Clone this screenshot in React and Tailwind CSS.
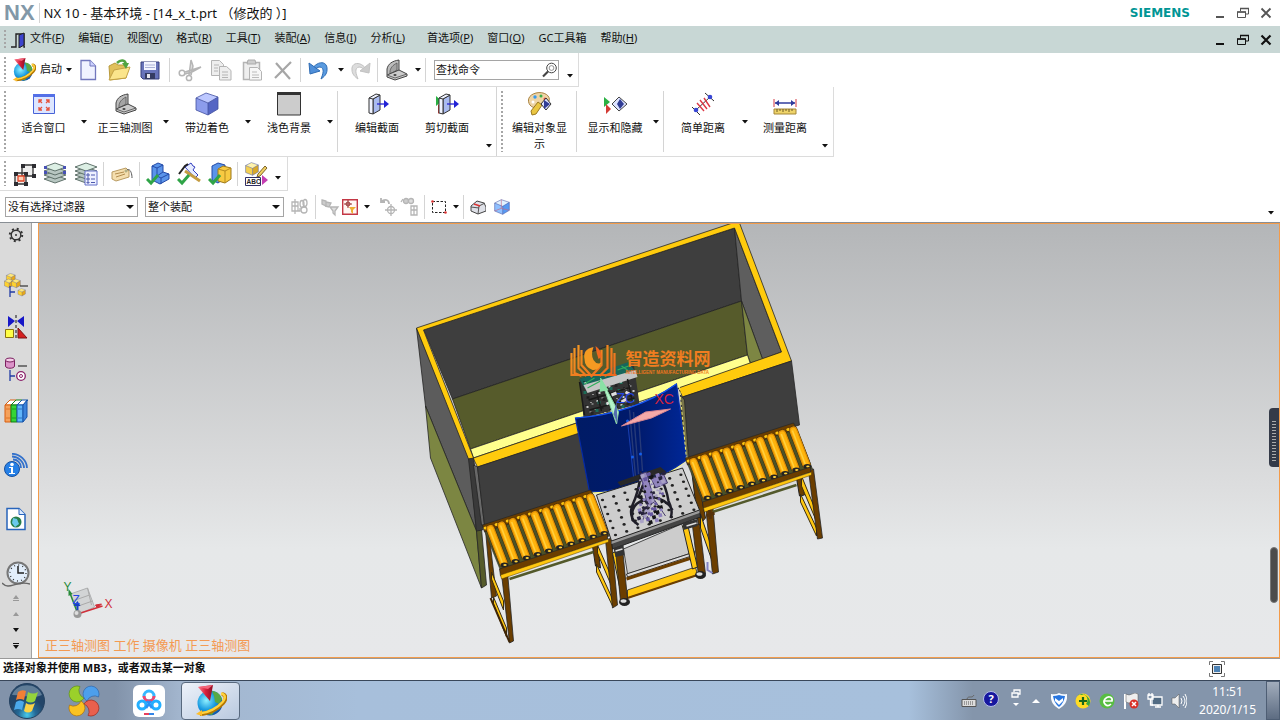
import React from 'react';

const Svg = ({ children, className = 'size-6', box = '0 0 24 24' }) => (
  <svg viewBox={box} className={'shrink-0 ' + className} fill="none" aria-hidden="true">{children}</svg>
);

const Caret = ({ className = '' }) => (
  <svg viewBox="0 0 6 4" className={'h-1 w-1.5 shrink-0 ' + className} aria-hidden="true"><path d="M0 0h6L3 3.6z" fill="#111" /></svg>
);

const Drop = ({ label, className = '' }) => (
  <button aria-label={label} className={'flex w-1.5 shrink-0 items-center ' + className}><Caret /></button>
);

const Sep = ({ className = 'h-6' }) => <div className={'w-px shrink-0 bg-[#d4d4d4] ' + className} />;

const Grip = () => <div className="my-1 ml-1 w-0.5 shrink-0 self-stretch bg-[repeating-linear-gradient(to_bottom,#a6a6a6_0_2px,transparent_2px_4px)]" />;

const Tool = ({ label, children, className = 'w-[31px]' }) => (
  <button aria-label={label} className={'flex h-7 shrink-0 items-center justify-center ' + className}>{children}</button>
);

const NxGlobe = ({ className = 'size-6' }) => (
  <Svg className={className} box="0 0 32 32">
    <defs>
      <radialGradient id="globe" cx=".35" cy=".4" r=".75"><stop stopColor="#8ff0ff" /><stop offset=".5" stopColor="#199be0" /><stop offset="1" stopColor="#0b3c99" /></radialGradient>
      <linearGradient id="cone" x1="0" x2="1"><stop stopColor="#ff8290" /><stop offset=".5" stopColor="#d8203c" /><stop offset="1" stopColor="#8c0d22" /></linearGradient>
    </defs>
    <circle cx="15" cy="18" r="12.5" fill="url(#globe)" />
    <path d="M17 6c5 0 9 4 10 8l-3 5-4-2-1-6zM14 24l6 1-3 5-4-1z" fill="#57a845" />
    <path d="M27 9c4 1 5 4 1 9-5 6-15 11-23 11" stroke="#b67700" strokeWidth="4" />
    <path d="M26 8.500c4.500 1 5 4 1.500 8.500-5 6-14 10.500-22 11.300" stroke="#ffd23e" strokeWidth="2.400" />
    <path d="m1 29 6-4v6z" fill="#ffbd27" />
    <path d="M3 2 18 0l-3 16z" fill="url(#cone)" />
    <path d="m3 2 15-2-5 4z" fill="#f2657a" />
  </Svg>
);

const NewDoc = () => <Svg><path d="M5 2.500h9l5.500 5.500v13.500H5z" fill="#f0f2ff" stroke="#7277bd" strokeWidth="1.300" /><path d="M14 2.500V8h5.500" fill="#cdd2ff" stroke="#7277bd" /></Svg>;
const OpenFolder = () => <Svg><path d="M2 8 8 5l3 2h8v13L3 22z" fill="#e0c05b" stroke="#b99a3c" /><path d="m2 22 5-10 16-3-4 11z" fill="#fbe58c" stroke="#c4a245" /><path d="M10 5c4-4 8-3 9 1" stroke="#50a442" strokeWidth="2.500" /><path d="m15 5 7 0-3 6z" fill="#50a442" /></Svg>;
const Save = () => <Svg><path d="M3 4h18v17H5l-2-2z" fill="#6773ba" stroke="#363f7c" /><path d="M6 4h12v8H6z" fill="#f2f4ff" /><path d="M7 15h10v6H7z" fill="#343b62" /><path d="M9 16h3v4H9z" fill="#e5e5ee" /><path d="M7 7h10M7 9.500h10" stroke="#aab1d6" /></Svg>;
const Cut = () => <Svg><g stroke="#b5b5b5" strokeWidth="1.500"><circle cx="4" cy="15" r="2.800" /><circle cx="11" cy="20" r="2.600" /><path d="m7 14 16-5-9 5-7 2M11 17l2-15 2 6-2 9" fill="#ddd" /></g></Svg>;
const Copy = () => <Svg><g fill="#eee" stroke="#b4b4b4"><path d="M2.500 2.500h8l4 4v11h-12z" /><path d="M10.500 8.500h7l4.500 4v9.500H10.500z" /><path d="M5 7h5M5 10h4M5 13h4M13 14h6M13 17h6M13 19.500h6" /></g></Svg>;
const Paste = () => <Svg><path d="M3.500 4.500h16v17h-16z" fill="#eee" stroke="#b4b4b4" strokeWidth="1.500" /><path d="M8 2h7l1 4H7z" fill="#ccc" stroke="#aaa" /><path d="M9.500 9.500h8l4 4v8.500h-12z" fill="#f7f7f7" stroke="#b4b4b4" /><path d="M12 14h5M12 17h7M12 19.500h7" stroke="#bbb" /></Svg>;
const Delete = () => <Svg><path d="m5 5 14 16M20 4 4 20" stroke="#a6a6a6" strokeWidth="2.200" /></Svg>;
const Undo = () => <Svg><path d="M5 11C11 2 21 3 20 12c0 4-3 7-6 9 2-5 4-11-1-12-3 0-5 2-5 4z" fill="#5a9be0" stroke="#2f6cb4" /><path d="m2 5 1 11 10-3z" fill="#4f8fd9" stroke="#2f6cb4" /></Svg>;
const Redo = () => <Svg><path d="M18 11C13 3 3 4 4 12c0 4 3 7 6 9-2-5-4-11 1-12 3 0 5 2 5 4z" fill="#ddd" stroke="#c2c2c2" /><path d="m22 5-1 10-9-2z" fill="#ccc" stroke="#c2c2c2" /></Svg>;
const Trimetric = () => <Svg><path d="M3 17V11c1-5 5-8 12-9v11L4 18z" fill="#bcbcbc" stroke="#444" /><path d="M6 14c0-4 3-7 7-9v7l-7 4z" fill="#a4a4a4" stroke="#555" strokeWidth=".8" /><path d="m3 17 12-5 8 4v2l-12 4-8-3z" fill="#cacaca" stroke="#444" /><path d="m3 17 8 3 12-4" stroke="#666" /><ellipse cx="11" cy="17" rx="1.600" ry="1" fill="#444" /></Svg>;
const Fit = () => <Svg><path d="M1.500 2.500h21v19h-21z" fill="#dde6ff" stroke="#4863d8" /><path d="M1 2h22v3H1z" fill="#5470e7" /><g stroke="#e6523c" strokeWidth="1.300"><path d="m10 11-3-3m0 3V8h3M14 11l3-3m0 3V8h-3M10 15l-3 3m0-3v3h3M14 15l3 3m0-3v3h-3" /></g></Svg>;
const Cube = ({ a = '#bdc8ff', b = '#8c9cec', c = '#5566c4' }) => <><path d="m1 6 10-5 12 4-10 6z" fill={a} /><path d="m1 6 12 5v12L1 18z" fill={b} /><path d="m13 11 10-6v12l-10 6z" fill={c} /><path d="m1 6 10-5 12 4v12l-10 6-12-5zM1 6l12 5 10-6M13 11v12" stroke="#4251a0" strokeWidth=".8" /></>;
const Shaded = () => <Svg><Cube /></Svg>;
const Light = () => <Svg><path d="M.500 1h23v22H.500z" fill="#ccc" stroke="#333" /><path d="M0 0h24v3H0z" fill="#333" /></Svg>;
const Section = ({ clip }) => <Svg>{clip && <><path d="m1 4 6 5-6 5z" fill="#2ab043" /><path d="m3 12 5 5-5 5z" fill="#d33b35" /></>}<path d="m8 7 7-4v15l-7 4z" fill="#a9bbef" stroke="#333" /><path d="m4 6 4 1v15l-4-1zM4 6l7-4 4 1-7 4" fill="#eef2ff" stroke="#333" /><path d="M12 12h8" stroke="#2323d5" strokeWidth="1.300" /><path d="m19 8 5 4-5 4z" fill="#2323d5" /></Svg>;
const Eye = () => <><path d="m13 12 5-6 5 6-5 6z" fill="#dde3ff" stroke="#333" /><path d="m16 8 6 4-6 5z" fill="#313d96" /></>;
const PaletteIcon = () => <Svg><path d="M8 1c8-2 15 3 13 8s-6 1-8 4-8 4-11 0S0 3 8 1z" fill="#eed4a6" stroke="#a98341" /><circle cx="7" cy="5" r="1.700" fill="#359bf0" /><circle cx="13" cy="4" r="1.500" fill="#3ab04a" /><circle cx="17" cy="7" r="1.500" fill="#e84a38" /><circle cx="5" cy="10" r="1.500" fill="#fff" /><path d="m3 19 7-9 4 3-6 9-4 1z" fill="#eac642" stroke="#9a7921" /><Eye /></Svg>;
const ShowHide = () => <Svg><path d="m1 5 6 5-6 5z" fill="#2ab043" /><path d="m3 12 5 5-5 5z" fill="#d33b35" /><path d="m9 12 7-7 8 7-8 7z" fill="#dce2ff" stroke="#444" /><path d="m14 12 3-5 4 5-4 5z" fill="#303c94" /></Svg>;
const Distance = () => <Svg><path d="m5 18 14-13M1 15l8 8M14 1l9 8" stroke="#333" /><path d="m6 11 7 8M9 8l7 9M13 6l6 9" stroke="#dc3845" strokeWidth="1.400" /><circle cx="5" cy="18" r="2.300" fill="#3846d4" /><circle cx="19" cy="5" r="2.300" fill="#3846d4" /></Svg>;
const Ruler = () => <Svg><path d="M1 7v8M23 7v8" stroke="#d43b44" /><path d="M2 11h20" stroke="#303c9c" strokeWidth="1.500" /><path d="m2 11 4-3v6zM22 11l-4-3v6z" fill="#303c9c" /><path d="M1 17h22v5H1z" fill="#eed369" stroke="#a58738" /><path d="M4 17v3m3-3v2m3-2v3m3-3v2m3-2v3m3-3v2" stroke="#6e5b25" /></Svg>;
const GroupIcon = () => <Svg><path d="M10 3h11v11H10zM3 11h11v11H3z" stroke="#333" strokeWidth="1.300" fill="#eee" />{[[9, 2], [20, 2], [20, 12], [2, 10], [12, 10], [2, 20], [12, 20]].map(([x, y]) => <path key={x + '-' + y} d={`M${x} ${y}h4v4h-4z`} fill="#2d2d32" />)}<path d="M6 14h6v5H6z" fill="#ffd0b4" stroke="#e24628" strokeWidth="1.300" /></Svg>;
const Layers = ({ list }) => <Svg>{[17, 13, 9, 5].map((y, i) => <path key={y} d={`m1 ${y} 11-4 11 4-11 4z`} fill={i === 3 ? '#dcefe4' : '#b7c6c1'} stroke="#52655f" strokeWidth=".9" />)}{list ? <><path d="M11 9h12v14H11z" fill="#eef1ff" stroke="#6571c9" /><path d="M13 12h2v2h-2zM13 16h2v2h-2zM13 20h2v1h-2zM17 13h4M17 17h4M17 20.500h4" stroke="#4c58ae" /></> : [[1, 4], [20, 4], [1, 9], [20, 9]].map(([x, y]) => <path key={x + '-' + y} d={`M${x} ${y}h3v3h-3z`} fill="#4851b5" />)}</Svg>;
const Tag = () => <Svg><path d="m2 10 14-4 3 3v6L6 19l-4-2z" fill="#f4deae" stroke="#b99b62" /><path d="m5 12 9-2M6 15l9-3" stroke="#b28b4d" /><circle cx="16" cy="9" r="1" fill="#fff" stroke="#996" /><path d="M17 8c3-2 5 3 5 8" stroke="#555" /></Svg>;
const Check = () => <path d="m1 17 4 4 7-8" stroke="#2fa447" strokeWidth="3" />;
const BlockCheck = ({ kind }) => (
  <Svg>
    {kind === 'ruler' && <><path d="m8 5 6-4 2 3 2 1-2 3 5 5-3 3z" fill="#e6ecff" stroke="#343fc0" /><path d="m8 9 15 10" stroke="#c49c42" strokeWidth="3" /><path d="m2 12 6-8 3-2" stroke="#222" strokeWidth="2" /></>}
    {!kind && <><path d="m6 4 6-3 5 2v7l6 2v5l-9 5-8-4z" fill="#5a94e9" stroke="#234aa8" /><path d="m6 4 5 2 6-3M11 6v8l6-4M11 14l4 2 8-4M15 16v6" stroke="#234aa8" /></>}
    {kind === 'gold' && <><path d="m4 4 6-3 7 2v13l-7 5-6-3z" fill="#5a94e9" stroke="#234aa8" /><path d="m10 7 5-3 8 2v11l-6 4-7-2z" fill="#f7ca42" stroke="#9c781b" /><path d="m10 7 7 2 6-3M17 9v12" stroke="#b58b20" /></>}
    <Check />
  </Svg>
);
const Abc = () => <Svg><g transform="translate(1 0) scale(.58)"><Cube a="#fff3ac" b="#f4d052" c="#d9a929" /></g><path d="m14 12 7-8 2 2-7 8-3 1z" fill="#f1cf63" stroke="#7b642a" /><path d="M1.500 15.500h15v8h-15z" fill="#fff" stroke="#302f65" /><path d="m18 13 6 5-6 5z" fill="#c43db2" /><text x="2.500" y="22" fontSize="6.500" fontWeight="700" fontFamily="Liberation Sans" fill="#222">ABC</text></Svg>;

const Search = () => <Svg className="size-4" box="0 0 16 16"><circle cx="9.500" cy="6" r="4.800" stroke="#444" /><circle cx="9.500" cy="6" r="2.400" stroke="#777" strokeWidth=".8" /><path d="m6 9.500-5 5" stroke="#444" strokeWidth="2.200" /></Svg>;

const menu = [['文件', 'F'], ['编辑', 'E'], ['视图', 'V'], ['格式', 'R'], ['工具', 'T'], ['装配', 'A'], ['信息', 'I'], ['分析', 'L'], ['首选项', 'P'], ['窗口', 'O'], ['GC工具箱', ''], ['帮助', 'H']];

function WindowButtons({ className, dark }) {
  const c = dark ? '#111' : '#555';
  return (
    <div className={'flex items-center gap-2.5 ' + className}>
      <button aria-label="最小化"><Svg className="size-3" box="0 0 12 12"><path d="M2 10h8" stroke={c} strokeWidth="2" /></Svg></button>
      <button aria-label="还原"><Svg className="h-3 w-3.5" box="0 0 14 12"><path d="M4.500 4V1.500h8V7H9M1.500 5h8v5.500h-8z" stroke={c} /><path d="M4 1.500h9M1 5h9" stroke={c} strokeWidth="1.600" /></Svg></button>
      <button aria-label="关闭"><Svg className="size-3" box="0 0 12 12"><path d="m1.500 1.500 9 9m0-9-9 9" stroke={c} strokeWidth={dark ? 2.2 : 1.8} /></Svg></button>
    </div>
  );
}

const Big = ({ label, children, className = 'w-[76px]' }) => (
  <button className={'flex shrink-0 flex-col items-center gap-1 pt-[5px] text-center text-[11px] leading-4 ' + className}>{children}<span>{label}</span></button>
);

function Select({ label, className }) {
  return (
    <label className={'relative flex shrink-0 items-center ' + className}>
      <select aria-label={label} className="h-5 w-full appearance-none border border-[#a5a5a5] bg-white pl-0.5 text-[11px] leading-4"><option>{label}</option></select>
      <svg viewBox="0 0 8 4" className="pointer-events-none absolute right-1 h-1 w-2" aria-hidden="true"><path d="M0 0h8L4 4z" fill="#111" /></svg>
    </label>
  );
}

const Faded = ({ kind }) => (
  <Svg className="size-5" box="0 0 20 20"><g stroke="#b5b5b5" strokeWidth="1.300">
    {kind === 'asm' && <><path d="M2 5h6v9H2zM5 2v15M2 9h6M5 14h5v-3" /><ellipse cx="12" cy="7" rx="2" ry="3.500" /><ellipse cx="15" cy="6" rx="2" ry="3.500" /><ellipse cx="14" cy="13" rx="3" ry="3" /></>}
    {kind === 'filter' && <><path d="m2 3 4 1v5l-4-2zM6 5l5 1-2 4-4-1" fill="#ccc" /><path d="M10 10h8l-3 4v4l-2-2v-2z" fill="#ddd" /></>}
    {kind === 'target' && <><path d="M3 5c4-4 8-2 8 2M3 1v4h4" strokeWidth="1.800" /><circle cx="13" cy="13" r="3.500" /><path d="M13 7v12M7 13h12" /></>}
    {kind === 'tree' && <><circle cx="6" cy="4" r="2.500" fill="#ccc" /><circle cx="11" cy="4" r="2.500" fill="#ddd" /><path d="M11 9h6v9h-6zM11 13h6M14 9v9M3 2l-2 3" /></>}
  </g></Svg>
);

function Toolbars() {
  return (
    <div className="shrink-0 bg-white">
      <div className="flex h-[34px] w-[579px] items-center border-r border-b border-[#dcdcdc]">
        <Grip />
        <button className="ml-1.5 flex w-[60px] shrink-0 items-center text-[11px] whitespace-nowrap"><NxGlobe /><span className="ml-1 pb-px">启动</span><Caret className="ml-1" /></button>
        <Tool label="新建"><NewDoc /></Tool><Tool label="打开"><OpenFolder /></Tool><Tool label="保存"><Save /></Tool>
        <Sep className="mx-1 h-6" />
        <Tool label="剪切"><Cut /></Tool><Tool label="复制"><Copy /></Tool><Tool label="粘贴"><Paste /></Tool><Tool label="删除"><Delete /></Tool>
        <Sep className="mx-0.5 h-6" />
        <Tool label="撤销"><Undo /></Tool><Drop label="撤销列表" className="ml-1" /><Tool label="重做"><Redo /></Tool>
        <Sep className="mx-0.5 h-6" />
        <Tool label="视图方向"><Trimetric /></Tool><Drop label="视图方向列表" className="mx-1" />
        <Sep className="mr-2 h-6" />
        <label className="flex h-5 w-[125px] items-center border border-[#a5a5a5]">
          <input aria-label="查找命令" defaultValue="查找命令" className="w-0 min-w-0 flex-1 pl-px text-[11px] leading-4 outline-none" /><Search />
        </label>
        <Drop label="工具栏选项" className="mt-3 ml-2" />
      </div>
      <div className="flex h-[70px] w-[834px] border-r border-b border-[#dcdcdc]">
        <Grip />
        <Big label="适合窗口" className="w-[75px]"><Fit /></Big><Drop label="适合窗口列表" />
        <Big label="正三轴测图"><Trimetric /></Big><Drop label="正三轴测图列表" />
        <Big label="带边着色"><Shaded /></Big><Drop label="带边着色列表" />
        <Big label="浅色背景"><Light /></Big><Drop label="浅色背景列表" />
        <Sep className="mr-1 ml-1 my-1" />
        <Big label="编辑截面" className="w-[70px]"><Section /></Big>
        <Big label="剪切截面" className="w-[70px]"><Section clip /></Big>
        <Drop label="视图工具栏选项" className="mt-12 mr-1 ml-1" />
        <Sep className="" />
        <Grip />
        <Big label="编辑对象显示" className="w-[73px] px-1.5"><PaletteIcon /></Big>
        <Sep className="my-1" />
        <Big label="显示和隐藏"><ShowHide /></Big><Drop label="显示和隐藏列表" className="mr-1" />
        <Sep className="my-1" />
        <Big label="简单距离" className="w-[78px]"><Distance /></Big><Drop label="简单距离列表" />
        <Big label="测量距离" className="w-[74px]"><Ruler /></Big><Drop label="测量工具栏选项" className="mt-12" />
      </div>
      <div className="flex h-[34px] w-[288px] items-center border-r border-b border-[#dcdcdc]">
        <Grip />
        <div className="ml-0.5 flex"><Tool label="组"><GroupIcon /></Tool><Tool label="图层设置"><Layers /></Tool><Tool label="移动至图层"><Layers list /></Tool></div>
        <Sep className="mx-0.5 h-6" /><Tool label="属性"><Tag /></Tool><Sep className="mx-0.5 h-6" />
        <Tool label="检查部件"><BlockCheck /></Tool><Tool label="检查尺寸"><BlockCheck kind="ruler" /></Tool><Tool label="检查装配"><BlockCheck kind="gold" /></Tool>
        <Sep className="mx-0.5 h-6" /><Tool label="标注"><Abc /></Tool><Drop label="更多" className="mt-2 ml-1" />
      </div>
      <div className="flex h-8 items-center border-b border-[#888e94] bg-white pr-1.5">
        <Select label="没有选择过滤器" className="ml-[5px] w-[133px]" />
        <Select label="整个装配" className="ml-[7px] w-[139px]" />
        <Tool label="组件约束"><Faded kind="asm" /></Tool>
        <Sep />
        <div className="ml-0.5 flex items-center">
          <Tool label="重置过滤器" className="w-6"><Faded kind="filter" /></Tool>
          <Tool label="常规选择" className="w-4"><Svg className="size-4" box="0 0 16 16"><path d="M.700.700h14.600v14.600H.700z" fill="#fff6f3" stroke="#c33745" strokeWidth="1.400" /><circle cx="6" cy="5" r="2" stroke="#933" /><path d="M6 1v8M2 5h8" stroke="#933" /><path d="M7 8h7l-3 3v4l-2-2v-2z" fill="#edae32" /></Svg></Tool>
        </div>
        <Drop label="常规选择列表" className="mx-1.5" />
        <Tool label="恢复选择" className="w-6"><Faded kind="target" /></Tool>
        <Tool label="选择树" className="w-5"><Faded kind="tree" /></Tool>
        <Sep className="mx-1 h-6" />
        <Tool label="矩形选择" className="w-5"><Svg className="size-4" box="0 0 16 16"><path d="M1.500 2.500h13v11h-13z" stroke="#222" strokeDasharray="2.500 1.500" /><circle cx="1.500" cy="2.500" r="1.300" fill="#d33" /><circle cx="14.500" cy="13.500" r="1.300" fill="#d33" /></Svg></Tool>
        <Drop label="矩形选择列表" className="mx-1" /><Sep className="mr-1 h-6" />
        <Tool label="实体" className="w-5"><Svg className="size-4" box="0 0 16 16"><path d="m1 7 6-5 7 2 2 4v4l-8 3-7-3z" fill="#dfe1e8" stroke="#444" /><path d="m8 15 1-8 6-3M1 8l8 1" stroke="#555" /><path d="m4 5 6 2" stroke="#d33" strokeWidth="1.500" /></Svg></Tool>
        <Tool label="面" className="ml-1 w-5"><Svg className="size-4"><Cube a="#e2f2ff" b="#8fc0ff" c="#589af2" /><path d="M11 1v13M1 18l10-4 12 3" stroke="#c36a86" /></Svg></Tool>
        <Drop label="选择条选项" className="mt-3 ml-auto" />
      </div>
    </div>
  );
}

const navIcons = {
  settings: <Svg className="size-4" box="0 0 16 16"><circle cx="8" cy="8" r="4.800" stroke="#333" strokeWidth="1.400" /><circle cx="8" cy="8" r="1" fill="#333" /><circle cx="8" cy="8" r="6.200" stroke="#333" strokeWidth="2" strokeDasharray="2 2.870" /></Svg>,
  assembly: <Svg><g transform="scale(.4)"><g transform="translate(5)"><Cube a="#ffe97a" b="#ffd22e" c="#e6a719" /></g><g transform="translate(0 14)"><Cube a="#ffe97a" b="#ffd22e" c="#e6a719" /></g><g transform="translate(18 14)"><Cube a="#ffe97a" b="#ffd22e" c="#e6a719" /></g><g transform="translate(34 38) scale(.85)"><Cube a="#ffe97a" b="#ffd22e" c="#e6a719" /></g></g><path d="M16 13h8" stroke="#111" /><path d="M6 13v11M6 19h5" stroke="#233ca5" strokeWidth="1.300" /></Svg>,
  constraint: <Svg><path d="m4 1 7 5-7 6zM20 1l-7 5 7 6z" fill="#1717c7" /><path d="M12 0v24" stroke="#111" strokeDasharray="3 2" /><path d="M1.500 14.500h8v8h-8z" fill="#ffff46" stroke="#8a7111" /><path d="m14 13 9 10h-9z" fill="#d52020" stroke="#7b1515" /></Svg>,
  part: <Svg><path d="M1.500 3v6c0 3 9 3 9 0V3" fill="#dc94c9" stroke="#7b215f" /><ellipse cx="6" cy="3" rx="4.500" ry="2" fill="#f5cfe9" stroke="#7b215f" /><path d="M14 9h9" stroke="#111" /><path d="M6 13v11M6 19h5" stroke="#233ca5" strokeWidth="1.300" /><circle cx="17" cy="19" r="4.300" fill="#fff" stroke="#8b226b" strokeWidth="1.300" /><circle cx="17" cy="19" r="1.500" stroke="#8b226b" /></Svg>,
  reuse: <Svg>{[[0, '#f5a15c', '#d85f10'], [6, '#35d435', '#137d13'], [12, '#5fb5fa', '#1754aa']].map(([x, a, b]) => <g key={x}><path d={`M${x + 1} 6l5-5h6l-5 5z`} fill="#fff" stroke={b} /><path d={`M${x + 1} 6h6v17H${x + 1}z`} fill={a} stroke={b} /><path d={`M${x + 2} 10h4M${x + 2} 19h4`} stroke={b} opacity=".7" /></g>)}<path d="m19 6 4-5v17l-4 5z" fill="#3b82da" stroke="#1754aa" /></Svg>,
  hd3d: <Svg><circle cx="8" cy="16" r="7.500" fill="#2680e6" stroke="#164f9f" /><circle cx="8" cy="11.500" r="1.800" fill="#fff" /><path d="M5 14h4v6h2v1H5v-1h2v-5H5z" fill="#fff" /><path d="M9 6.500c4 0 8 3 8 8.500M8 3.500c6 0 12 5 12 11.500M8 .800c8 0 15 7 15 14.200" stroke="#3371cb" strokeWidth="1.800" /></Svg>,
  browser: <Svg><path d="M3 1.500h12l6 6v15H3z" fill="#fff" stroke="#2864bb" strokeWidth="1.500" /><path d="M15 1.500v6h6" fill="#dceaff" stroke="#2864bb" /><circle cx="12" cy="15" r="5.500" fill="#287e4a" /><path d="m9 11 4 1 2 5-4 3-3-4z" fill="#6ac9ed" /></Svg>,
  history: <Svg className="size-7" box="0 0 28 28"><circle cx="16" cy="12" r="10.500" fill="#e2eefb" stroke="#777" strokeWidth="2" /><circle cx="16" cy="12" r="8" stroke="#333" strokeWidth="1.300" strokeDasharray="1 3.190" /><path d="M16 5v7h6" stroke="#222" strokeWidth="1.500" /><path d="M0 22c8 8 13-3 28 1" stroke="#666" strokeWidth="1.300" /></Svg>,
};
const nav = [
  ['设置', 'mb-[30px]', 'settings'],
  ['装配导航器', 'mb-[18px]', 'assembly'],
  ['约束导航器', 'mb-[18px]', 'constraint'],
  ['部件导航器', 'mb-[18px]', 'part'],
  ['重用库', 'mb-[30px]', 'reuse'],
  ['HD3D 工具', 'mb-[30px]', 'hd3d'],
  ['浏览器', 'mb-[30px]', 'browser'],
  ['历史记录', '', 'history'],
];

const line = (a, b, stroke, w) => <path d={`M${a}L${b}`} stroke={stroke} strokeWidth={w} />;

function Rollers({ x, y }) {
  const at = (dx, dy) => `${x + dx} ${y + dy}`;
  return (
    <g>
      <path d={`M${at(-5, -2)}L${at(104, -37)}L${at(122, 8)}L${at(14, 45)}z`} fill="#4b5228" stroke="#333" strokeWidth=".6" />
      <path d={`M${at(-5, -3)}L${at(103, -38)}l3 6L${at(-3, 4)}z`} fill="#6b3e00" stroke="#262626" strokeWidth=".7" />
      {Array.from({ length: 10 }, (_, i) => {
        const px = x + 3 + i * 11.1, py = y + 1 - i * 3.5;
        return (
          <g key={i}>
            <ellipse cx={px - 5} cy={py - 1} rx="2" ry="1.500" fill="#ffc710" />
            <path d={`M${px} ${py}l13 34`} stroke="#3a2a08" strokeWidth="9" strokeLinecap="round" />
            <path d={`M${px} ${py}l13 34`} stroke="#e08f06" strokeWidth="8" strokeLinecap="round" />
            <path d={`M${px} ${py}l13 34`} stroke="#ffb40c" strokeWidth="5.500" strokeLinecap="round" />
            <path d={`M${px - 1} ${py}l13 34`} stroke="#ffd040" strokeWidth="1.500" />
            <ellipse cx={px + 14} cy={py + 36} rx="4" ry="2.600" fill="#222" />
            <ellipse cx={px + 14.500} cy={py + 36} rx="1.700" ry="1.100" fill="#ffd13c" />
          </g>
        );
      })}
      <path d={`M${at(12, 41)}L${at(120, 6)}v5L${at(13, 48)}z`} fill="#6b3e00" stroke="#262626" strokeWidth=".7" />
      <path d={`M${at(13, 47)}L${at(121, 11)}v3L${at(14, 51)}z`} fill="#ffc710" stroke="#4b3500" strokeWidth=".5" />
      {line(at(22, 51), at(106, 24), '#53592b', 2.5)}
    </g>
  );
}

const holes = Array.from({ length: 48 }, (_, i) => { const c = i % 8, r = Math.floor(i / 8); return [603 + c * 11.2 + r * 2.6, 500 - c * 3.6 + r * 7]; });
const debris = Array.from({ length: 70 }, (_, i) => [584 + (i * 23) % 50, 381 + (i * 13) % 32, ['#141414', '#c8c8c8', '#1d6b57', '#efefef', '#777', '#222'][i % 6], 1 + (i % 3)]);
const gripper = Array.from({ length: 75 }, (_, i) => { const t = (i * 17) % 50; return [640 + (i * 11) % 24 - t / 12, 472 + t, ['#26223c', '#8d80bd', '#151518', '#6657a0', '#a9a2c6'][i % 5], 1.5 + (i % 3)]; });

function Scene() {
  return (
    <svg viewBox="39 224 1241 433" preserveAspectRatio="xMidYMid slice" className="absolute inset-0 size-full" fill="none" role="img" aria-label="装配模型">
      <defs>
        <linearGradient id="shield" x1="0" x2="1"><stop stopColor="#001b65" /><stop offset=".55" stopColor="#001a6c" /><stop offset="1" stopColor="#002797" /></linearGradient>
        <linearGradient id="mark" x1="0" x2="1" y2="1"><stop stopColor="#f59a22" /><stop offset="1" stopColor="#ed661e" /></linearGradient>
      </defs>
      <g stroke="#252525" strokeWidth=".8" strokeLinejoin="round">
        <path d="M417 328 470 458 477 531 426 406z" fill="#5c5c5c" />
        <path d="M426 406 477 531 482 588 431 458z" fill="#7c8642" />
        <path d="M477 531 482 529 487 585 482 588z" fill="#565b2b" />
        <path d="M424 329 735 228 742 301 453 399z" fill="#3e3e3e" />
        <path d="M453 399 742 301 748 355 471 449z" fill="#565b2b" />
        <path d="M735 228 782 352 763 359 742 301z" fill="#5e5e5e" />
        <path d="M742 301 763 359 751 363 748 355z" fill="#7d8643" />
        <path d="M471 449 748 355 751 364 474 458z" fill="#ffff8e" />
        <path d="M417 328 733 223H740L792 361 683 397 679 388 782 352 735 228 424 330 474 458 580 422 583 433 478 467 474 459 469 459z" fill="#ffcb0d" />
        <path d="M469 459 474 458 484 525 483 530 477 531z" fill="#3a3a3a" />
        <path d="M474 465 478 467 485 525 482 525z" fill="#686868" />
        <path d="M478 467 583 432 590 491 485 525z" fill="#3e3e3e" />
        <path d="M683 397 792 361 800 425 690 459 681 411z" fill="#3e3e3e" />
        <path d="M681 395 685 400 689 458 686 462z" fill="#777349" />
      </g>
      <path d="m580 379 54-17 6 42-56 14z" fill="#333" />
      <path d="m580 379 49-17 7 10-51 16z" fill="#17665c" />
      {debris.map(([x, y, c, s], i) => <path key={i} d={`M${x} ${y}h${s}v${s}h-${s}z`} fill={c} />)}
      <path d="m584 385 52-15 2 7-50 16z" fill="#c5c5c5" />
      <path d="m580 382 5 33M597 392l5 19M628 379l5 23M589 400l40-12M590 410l45-12M609 391l9 17" stroke="#191919" strokeWidth="1.500" />
      <path d="m585 384 10-6m-7 10 13-7M618 370l14-5M622 366l6 4" stroke="#2fae5c" strokeWidth="1.200" />
      <path d="M612 395l5-2m-10 11 4-2m15-10 4 2m-8 8 5-3" stroke="#ddd" strokeWidth="3" />
      <path d="M592 491Q646 493 688 457" stroke="#ffff80" strokeWidth="5" />
      <path d="M576 418Q634 414 677 384L687 460Q646 490 590 492z" fill="url(#shield)" stroke="#052aa7" strokeWidth="1.200" />
      <path d="M576 418Q634 414 677 384" stroke="#1454ee" strokeWidth="1.200" />
      <path d="m630 410 6 67M634 412l5 62M639 416l4 55" stroke="#263a78" strokeWidth="1.400" />
      <path d="m628 421 6 56" stroke="#2a58e0" strokeWidth=".6" />
      {[[628, 421], [637, 418], [633, 457], [641, 454]].map(([x, y]) => <circle key={x} cx={x} cy={y} r="1.500" fill="#145eea" />)}
      <path d="m680 387 7 72" stroke="#efeb76" strokeDasharray="3 2" />

      <path d="M486 530 489 530 497 596 492 598z" fill="#6b3e00" stroke="#252525" strokeWidth=".8" />
      <path d="m492 572 12 29v9l-12-31zM494 597l13 31v9l-13-33z" fill="#ffc710" stroke="#3c2e11" />
      <path d="m502 574 6-2 6 69-4 2z" fill="#6b3e00" stroke="#252525" strokeWidth=".8" />
      <path d="m491 598 19 44" stroke="#3e2406" strokeWidth="2" />
      <path d="m593 546 5-1 3 23-5-2z" fill="#6b3e00" stroke="#222" />
      <path d="m598 545 14 32v9l-14-33zM597 564l16 35v7l-16-34z" fill="#ffc710" stroke="#3c2e11" />
      <path d="m606 540 6-2 6 67-5 3z" fill="#6b3e00" stroke="#252525" strokeWidth=".8" />
      <Rollers x={488} y={528} />

      <path d="m691 462 4-1 11 57-7 8z" fill="#6b3e00" stroke="#222" />
      <path d="m701 514 12 36v12l-12-34z" fill="#ffc710" stroke="#222" />
      <path d="m706 505 7-2 6 69-6 2z" fill="#6b3e00" stroke="#252525" strokeWidth=".8" />
      <path d="m797 478 5-1 3 18-5 1z" fill="#6b3e00" stroke="#222" />
      <path d="m802 476 14 34v9l-14-33zM801 494l16 34v8l-16-34z" fill="#ffc710" stroke="#3c2e11" />
      <path d="m809 471 5-2 9 69-5 1z" fill="#6b3e00" stroke="#252525" strokeWidth=".8" />
      <Rollers x={691} y={461} />

      <path d="m624 549 58-25 13 28-67 22z" fill="#ccc" stroke="#252525" strokeWidth=".8" />
      <path d="m627 574 68-22v3l-67 22z" fill="#ddd" stroke="#333" />
      <path d="m627 579 68-22" stroke="#6b3e00" strokeWidth="3" />
      <path d="m628 590 68-23 2 8-70 23z" fill="#ffc710" stroke="#252525" strokeWidth=".8" />
      <path d="m628 598 70-23" stroke="#6b3e00" strokeWidth="2" />
      <path d="m613 553 5-2 10 49-5 1z" fill="#ffc710" stroke="#252525" />
      <path d="m616 550 7-2 5 51-7 2z" fill="#6b3e00" stroke="#252525" strokeWidth=".8" />
      <path d="m683 526 5-2 10 43-5 2z" fill="#ffc710" stroke="#252525" />
      <path d="m693 526 7-2 6 50-7 2z" fill="#6b3e00" stroke="#252525" strokeWidth=".8" />
      {[[625, 602], [701, 575]].map(([x, y]) => <g key={x}><ellipse cx={x} cy={y} rx="5.500" ry="4" fill="#222" /><ellipse cx={x - 1} cy={y - 1} rx="3" ry="1.800" fill="#ddd" /></g>)}
      <path d="m612 541 88-31 1 7-88 32z" fill="#444" stroke="#222" />
      <path d="m612 541 88-31v3l-88 31z" fill="#999" />
      <path d="m597 495 86-27 17 42-88 31z" fill="#cdcdcd" stroke="#252525" />
      {holes.map(([x, y], i) => <ellipse key={i} cx={x} cy={y} rx="1.600" ry="1.300" fill="#222" />)}
      <path d="m614 548 10-3 1 10-9 2zM683 523l15-4v7l-14 4z" fill="#333" />
      <path d="m616 551 7-2M687 526l10-3" stroke="#ddd" strokeWidth="1.500" />
      <path d="m618 482 43-15 6 5-46 14z" fill="#282828" />
      <path d="M641 476q-2 16-8 29-4 10 3 18M660 475q7 13 9 26 5 10 2 17M645 500q-15 4-12 20l6 5M653 497q14 2 20 13M645 481l-6 16 12 7-7 13" stroke="#1f1e28" strokeWidth="2.500" />
      <path d="m641 474 6-2 8 30-7 4zM652 479l12-5 4 9-12 5zM649 503l-6 18M655 500l11 16" fill="#9286bd" stroke="#443b69" />
      {gripper.map(([x, y, c, s], i) => <path key={i} d={`M${x} ${y}l${s} -1 1 ${s}-${s} 1z`} fill={c} />)}
      <path d="m707 516 8-3m-5-3 1 9" stroke="#55320b" strokeWidth="3" />
      <path d="M708 562v8l5 3" stroke="#8284c5" strokeWidth="2" />

      <path d="m601 378 16 46 2-12z" fill="#b5f3c8" stroke="#8ad7a2" /><path d="m601 378-1 14 9-2z" fill="#8ae1a5" />
      <path d="m617 401 1 23-4-10z" fill="#536db0" />
      <path d="m622 426 24-14 25-3-19 9z" fill="#f5aaa8" stroke="#d98591" />
      <g fontFamily="Liberation Sans, sans-serif" fontSize="14"><text x="655" y="404" fill="#d4253c">XC</text><text x="617" y="403" fill="#2547e5">ZC</text></g>

      <path d="M572 353v22h45M575 348v25l7 3M579 345v23l8 8M615 353v22M612 348v25l-7 3M608 345v23l-8 8M582 350v15l10 11 10-11v-15" stroke="url(#mark)" strokeWidth="2.200" />
      <path d="M585 359q-2-10 9-12-3 8 0 13 4 6 8 2-2 9-9 8-8-3-8-11z" fill="#f59a22" /><path d="M596 346q6 4 6 11l-3 2q-2-5-3-13z" fill="#ed661e" />
      <text x="626" y="365" fontFamily="'Noto Sans CJK SC', sans-serif" fontWeight="700" fontSize="17" fill="#f17d20">智造资料网</text>
      <text x="626" y="374" fontFamily="Liberation Sans, sans-serif" fontWeight="700" fontSize="4.500" fill="#ef761f">INTELLIGENT MANUFACTURING DATA</text>

      <path d="m71 594 17-6 7 19-15 7z" fill="#d2d4d5" stroke="#aeb0b1" /><path d="m73 601 17-6m-14 12 17-6M88 588l4 17" stroke="#aaa" />
      <path d="m78 614 25-8" stroke="#d0303b" strokeWidth="1.500" /><path d="m102 604-6 1 2 3z" fill="#d0303b" stroke="#d0303b" />
      <path d="m78 613-8-21" stroke="#288a39" strokeWidth="1.500" /><path d="m69 589 0 7 4-2z" fill="#288a39" />
      <path d="M78 614v-11" stroke="#163fc5" strokeWidth="2" /><path d="m78 601-4 5h7z" fill="#163fc5" />
      <circle cx="78" cy="614" r="4" fill="#999" /><circle cx="77" cy="613" r="2" fill="#ddd" />
      <g fontFamily="Liberation Sans, sans-serif" fontSize="12"><text x="105" y="608" fill="#d0303b">X</text><text x="64" y="591" fill="#288a39">Y</text><text x="73" y="604" fill="#2547e5">Z</text></g>
    </svg>
  );
}

const petals = [[0, '#9bd02a', '#5f9116'], [90, '#4d9fec', '#3065a7'], [180, '#e8604e', '#9b2920'], [270, '#fac220', '#a96f10']];

function Taskbar() {
  return (
    <footer className="flex h-10 shrink-0 items-center border-t border-[#39475a] bg-[linear-gradient(to_right,#8293aa_0%,#8293aa_9%,#a2b5cd_14%,#a7bfdb_28%,#a7c0dc_71%,#8495ab_76%,#8495ab_100%)] text-white">
      <button aria-label="开始" className="ml-2"><Svg className="size-[38px]" box="0 0 38 38"><defs><radialGradient id="orb" cx=".5" cy=".9"><stop stopColor="#48cbec" /><stop offset=".5" stopColor="#246996" /><stop offset="1" stopColor="#234568" /></radialGradient></defs><circle cx="19" cy="19" r="17.500" fill="url(#orb)" stroke="#234160" /><path d="M4 13c5-13 25-13 30 0-9 4-19 0-30 0z" fill="#d3e5f0" opacity=".35" /><path d="M10 10q4-3 8-1l-2 9q-4-2-8 0z" fill="#f28035" /><path d="M20 10q5 3 10 0l-3 9q-4 3-9 0z" fill="#95d33b" /><path d="M8 20q4-3 8 0l-2 8q-4-2-8 0z" fill="#4ba9ec" /><path d="M18 21q4 3 9 0l-3 8q-4 3-8 0z" fill="#fbd246" /></Svg></button>
      <button aria-label="四叶草" className="ml-[22px]"><Svg className="size-8" box="0 0 32 32">{petals.map(([a, fill, edge]) => <path key={a} transform={`rotate(${a} 16 16)`} d="M12 1.500A8 8 0 1 0 16 13A8 8 0 0 1 12 1.500z" fill={fill} stroke={edge} strokeWidth=".7" />)}</Svg></button>
      <button aria-label="百度网盘" className="ml-[33px] flex size-8 items-center justify-center rounded-md bg-white"><Svg className="size-7" box="0 0 28 28"><circle cx="14" cy="9" r="5" stroke="#35b7ff" strokeWidth="3" /><path d="M9 9a5 5 0 0 0 10 0" stroke="#f1476d" strokeWidth="3" /><circle cx="7" cy="18" r="4" stroke="#24afff" strokeWidth="3" /><circle cx="21" cy="18" r="4" stroke="#24afff" strokeWidth="3" /><path d="m12 14 5 7M16 14l-5 7" stroke="#2a90f5" strokeWidth="2.500" /><path d="M9 27h5" stroke="#e83f5c" strokeWidth="2" /><path d="M14 27h5" stroke="#3385e8" strokeWidth="2" /></Svg></button>
      <button aria-label="NX 10" className="ml-4 flex h-[38px] w-[59px] items-center justify-center rounded-sm border border-[#58697e] bg-gradient-to-br from-[#edf2fa] to-[#b9c9df]"><NxGlobe className="size-8" /></button>
      <div className="ml-auto flex h-full items-center">
        <button aria-label="输入法"><Svg className="size-4" box="0 0 16 16"><path d="M1 6.500h14v7H1z" fill="#ddd" stroke="#555" /><path d="M3 9h10M3 11h10" stroke="#555" strokeDasharray="1 1" /><path d="M6 6c1-4 5 0 7-4" stroke="#666" /></Svg></button>
        <button aria-label="帮助" className="mb-1 ml-1.5 flex size-4 items-center justify-center rounded-full border border-[#b4bde9] bg-[#17179e] text-[11px] leading-3 font-bold">?</button>
        <button aria-label="语言栏选项" className="mb-1.5 ml-3 flex flex-col items-center gap-1"><Svg className="h-2.5 w-2.5" box="0 0 10 10"><path d="M3 3V1h6v4H7M1 4h6v4H1z" stroke="#fff" strokeWidth="1.300" /></Svg><Svg className="h-1 w-1.5" box="0 0 6 4"><path d="M0 0h6L3 3z" fill="#fff" /></Svg></button>
        <button aria-label="显示隐藏的图标" className="ml-2.5"><Svg className="h-2 w-2.5" box="0 0 10 8"><path d="m1 6 4-4 4 4z" fill="#fff" /></Svg></button>
        <div className="ml-2.5 flex items-center gap-2">
          <Svg className="size-4" box="0 0 16 16"><path d="M8 0q3 2 8 1c1 8-3 12-8 15C3 13-1 9 0 1q5 1 8-1z" fill="#f8fbff" /><path d="M8 2q3 1 6 1-1 7-6 11-5-4-6-11 3 0 6-1z" fill="#2876e0" /><path d="m4 5 4 3 4-3v3l-4 4-4-4z" fill="#fff" /></Svg>
          <Svg className="size-4" box="0 0 16 16"><circle cx="8" cy="8" r="7.500" fill="#ffdb24" /><path d="M2 3a8 8 0 0 1 12 10l-3-2A6 6 0 0 0 2 3z" fill="#3ba43d" /><path d="M8 4v8M4 8h8" stroke="#17671c" strokeWidth="2.200" /></Svg>
          <Svg className="size-4" box="0 0 16 16"><circle cx="8" cy="8" r="7.500" fill="#58bd43" /><path d="M12 11c-4 4-9-1-6-5s8-2 7 2H5" stroke="#fff" strokeWidth="1.700" /></Svg>
          <Svg className="size-4" box="0 0 16 16"><path d="M2 1v15" stroke="#fff" strokeWidth="2" /><path d="M3 1q3 2 6 0t6 0v8q-3-2-6 0t-6 0z" fill="#eee" stroke="#555" strokeWidth=".5" /><circle cx="11" cy="11" r="4.500" fill="#d83127" /><path d="m9 9 4 4m0-4-4 4" stroke="#fff" strokeWidth="1.500" /></Svg>
          <Svg className="size-4" box="0 0 16 16"><path d="M5 4h10v8H5zM8 14h6M11 12v2" fill="#526b83" stroke="#fff" strokeWidth="1.300" /><path d="M1 2h5v4H1zM2 0v3m3-3v3M3.500 6v6H6" stroke="#fff" strokeWidth="1.300" /></Svg>
          <Svg className="size-4" box="0 0 16 16"><path d="M1 5h3l4-4v14l-4-4H1z" fill="#eee" stroke="#555" strokeWidth=".5" /><path d="M10 5q2 3 0 6M12 3q4 5 0 10M14 1q4 7 0 14" stroke="#fff" /></Svg>
        </div>
        <time className="ml-3 text-center text-xs leading-[18px]"><span className="block">11:51</span><span className="block">2020/1/15</span></time>
        <button aria-label="显示桌面" className="ml-2.5 h-full w-3.5 border border-[#4e5e74] bg-gradient-to-b from-[#a2adbc] to-[#5d6c82]" />
      </div>
    </footer>
  );
}

export default function App() {
  return (
    <div className="flex h-screen flex-col overflow-hidden bg-white font-['Noto_Sans','Noto_Sans_CJK_SC',sans-serif] text-[11px] leading-4 text-[#111]">
      <header className="flex h-[26px] shrink-0 items-center pr-2 pl-1">
        <span className="font-['Liberation_Sans',sans-serif] text-[22px] leading-6 font-bold text-[#8298a8]">NX</span>
        <Sep className="mx-1 h-5" />
        <h1 className="text-[13px]">NX 10 - 基本环境 - [14_x_t.prt （修改的 ）]</h1>
        <span className="ml-auto font-['DejaVu_Sans',sans-serif] text-xs font-bold text-[#009595]">SIEMENS</span>
        <WindowButtons className="ml-6" />
      </header>
      <nav className="flex h-[27px] shrink-0 items-center bg-[#c8d7d5] pr-2">
        <Grip />
        <Svg className="mx-1 size-4" box="0 0 16 16"><path d="M1 15h5V2h8v13h1" stroke="#222" strokeWidth="1.400" /><path d="m9 3 5-2v12l-5 3z" fill="#3b43cd" stroke="#222" /></Svg>
        <div className="flex gap-3.5 pb-[3px]">
          {menu.map(([t, k]) => <button key={t} className={'whitespace-nowrap ' + (t === '首选项' ? 'ml-2' : '')}>{t}{k && <>(<u>{k}</u>)</>}</button>)}
        </div>
        <WindowButtons dark className="ml-auto" />
      </nav>
      <Toolbars />
      <main className="flex min-h-0 flex-1">
        <aside className="flex w-8 shrink-0 flex-col items-center border-r border-[#a3a3a3] bg-[#dadada] pt-1">
          {nav.map(([label, gap, icon]) => <button key={label} aria-label={label} className={gap}>{navIcons[icon]}</button>)}
          <div className="mt-1.5 flex flex-col items-center gap-2.5">
            <Svg className="h-1.5 w-2" box="0 0 8 6"><path d="m1 4 3-4 3 4zM1 5h6v1H1z" fill="#999" /></Svg>
            <Svg className="h-1.5 w-2" box="0 0 8 6"><path d="m1 5 3-4 3 4z" fill="#999" /></Svg>
            <Svg className="h-1.5 w-2" box="0 0 8 6"><path d="m1 1 3 4 3-4z" fill="#111" /></Svg>
            <Svg className="h-1.5 w-2" box="0 0 8 6"><path d="M1 0h6v1H1zM1 2l3 4 3-4z" fill="#111" /></Svg>
          </div>
        </aside>
        <section className="relative ml-1.5 min-w-0 flex-1 overflow-hidden border border-[#f39b4a] bg-[linear-gradient(to_bottom,#b4b6b8,#dcddde_60%,#e6e8e9_75%,#e7e8ea)]">
          <Scene />
          <p className="absolute bottom-1 left-1.5 text-[13px] leading-4 text-[#f49a52]">正三轴测图 工作 摄像机 正三轴测图</p>
          <div className="absolute top-[184px] right-0 flex h-[59px] w-2.5 items-end justify-center rounded-l bg-[#343a48] pb-1.5"><div className="h-10 w-1 bg-[repeating-linear-gradient(to_bottom,#aaa_0_1px,transparent_1px_3px)]" /></div>
          <div className="absolute top-[323px] right-px h-14 w-2 rounded-full border border-[#777] bg-[#4b4b4b]" />
        </section>
      </main>
      <div className="flex h-[22px] shrink-0 items-center border-t border-[#999] pr-[55px] pb-0.5 pl-[3px] font-bold">
        <span className="pb-px">选择对象并使用 MB3，或者双击某一对象</span>
        <button aria-label="全屏" className="ml-auto"><Svg className="size-4" box="0 0 16 16"><path d="M.500 4V.500H4M12 .500h3.500V4M15.500 12v3.500H12M4 15.500H.500V12" stroke="#777" /><path d="M3.500 3.500h9v9h-9z" fill="#eee" stroke="#333" /><path d="M5 5h6v6H5z" fill="#4c82b5" /></Svg></button>
      </div>
      <Taskbar />
    </div>
  );
}
